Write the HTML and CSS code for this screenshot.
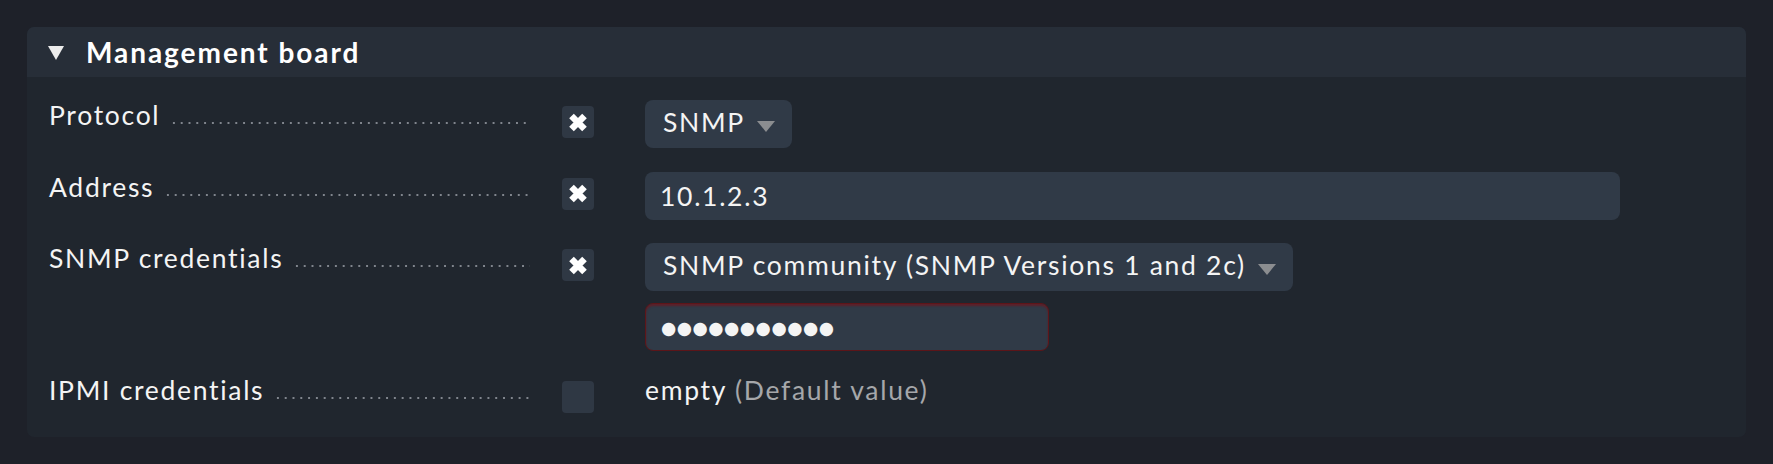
FILE: index.html
```html
<!DOCTYPE html>
<html lang="en">
<head>
<meta charset="utf-8">
<title>Management board</title>
<link rel="stylesheet" href="styles.css">
</head>
<body>
<div class="panel">
  <div class="panel-head">
    <svg class="caret" width="16" height="14" viewBox="0 0 16 14"><polygon points="0,0 16,0 8,14" fill="#ececec"/></svg>
    <span class="title">Management board</span>
  </div>
  <div class="panel-body">
    <div class="row">
      <div class="label"><span class="label-text">Protocol</span><span class="leader"></span></div>
      <div class="check on"><svg width="20" height="19" viewBox="0 0 20 19"><path d="M3.5 3 L16.5 16 M16.5 3 L3.5 16" stroke="#fff" stroke-width="6.5" stroke-linecap="butt"/></svg></div>
      <div class="value"><div class="select">SNMP<span class="arrow"></span></div></div>
    </div>
    <div class="row">
      <div class="label"><span class="label-text">Address</span><span class="leader"></span></div>
      <div class="check on"><svg width="20" height="19" viewBox="0 0 20 19"><path d="M3.5 3 L16.5 16 M16.5 3 L3.5 16" stroke="#fff" stroke-width="6.5" stroke-linecap="butt"/></svg></div>
      <div class="value"><div class="input address">10.1.2.3</div></div>
    </div>
    <div class="row">
      <div class="label"><span class="label-text">SNMP credentials</span><span class="leader"></span></div>
      <div class="check on"><svg width="20" height="19" viewBox="0 0 20 19"><path d="M3.5 3 L16.5 16 M16.5 3 L3.5 16" stroke="#fff" stroke-width="6.5" stroke-linecap="butt"/></svg></div>
      <div class="value stack">
        <div class="select">SNMP community (SNMP Versions 1 and 2c)<span class="arrow"></span></div>
        <div class="input password"><span class="mask">●●●●●●●●●●●</span></div>
      </div>
    </div>
    <div class="row">
      <div class="label"><span class="label-text">IPMI credentials</span><span class="leader"></span></div>
      <div class="check"></div>
      <div class="value plain">empty <span class="muted">(Default value)</span></div>
    </div>
  </div>
</div>
</body>
</html>
```
FILE: styles.css
```css
html, body {
  margin: 0;
  background: #1e2129;
}
body {
  padding: 27px;
  font-family: "Lato", "Liberation Sans", sans-serif;
  color: #f2f2f2;
}
.panel {
  background: #20262e;
  border-radius: 7px;
  overflow: hidden;
}
.panel-head {
  height: 50px;
  background: #272e38;
  display: flex;
  align-items: center;
  padding-left: 21px;
}
.caret {
  display: block;
  margin-top: 2px;
}
.title {
  margin-left: 22px;
  font-weight: 700;
  font-size: 28px;
  letter-spacing: 1.95px;
  color: #fff;
  line-height: 30px;
}
.panel-body {
  padding: 23px 22px 24px 22px;
  display: flex;
  flex-direction: column;
  gap: 23.5px;
}
.row {
  display: flex;
  align-items: flex-start;
}
.label {
  width: 481px;
  flex: none;
  display: flex;
  align-items: flex-start;
  font-size: 26.5px;
  letter-spacing: 1.7px;
  line-height: 30px;
  color: #f4f4f4;
}
.label-text {
  white-space: nowrap;
}
.leader {
  flex: 1;
  height: 4px;
  margin-top: 21px;
  margin-left: 10px;
  background-image: radial-gradient(circle, #80858d 1px, transparent 1.5px);
  background-size: 7.8px 4px;
  background-repeat: repeat-x;
}
.check {
  flex: none;
  width: 32px;
  height: 32px;
  margin-top: 6px;
  margin-left: 32px;
  background: #2f3844;
  border-radius: 4px;
  display: flex;
  align-items: center;
  justify-content: center;
}
.check svg {
  display: block;
}
.value {
  margin-left: 51px;
  flex: 1;
  font-size: 26.5px;
  letter-spacing: 1.7px;
}
.value.stack {
  display: flex;
  flex-direction: column;
  align-items: flex-start;
  gap: 12px;
}
.value.plain {
  line-height: 30px;
  color: #f4f4f4;
}
.muted {
  color: #a5a7aa;
}
.select {
  display: inline-flex;
  align-items: baseline;
  height: 48px;
  box-sizing: border-box;
  padding: 0 17px 4px 18px;
  line-height: 44px;
  background: #303a47;
  border-radius: 8px;
  color: #f4f4f4;
  white-space: nowrap;
}
.arrow {
  display: inline-block;
  width: 0;
  height: 0;
  margin-left: 12px;
  border-left: 9px solid transparent;
  border-right: 9px solid transparent;
  border-top: 11px solid #8b8d90;
  vertical-align: baseline;
}
.input {
  height: 48px;
  box-sizing: border-box;
  background: #303a47;
  border-radius: 8px;
  line-height: 48px;
  padding-left: 15px;
  color: #f4f4f4;
}
.input.address {
  width: 975px;
}
.input.password {
  width: 404px;
  border: 1px solid #5c1519;
  box-shadow: inset 0 2px 2px rgba(130, 10, 16, 0.55);
  line-height: 46px;
  padding-left: 15px;
}
.mask {
  font-family: "DejaVu Sans", sans-serif;
  font-size: 17.5px;
  letter-spacing: 0.5px;
  position: relative;
  top: -3px;
}
```
